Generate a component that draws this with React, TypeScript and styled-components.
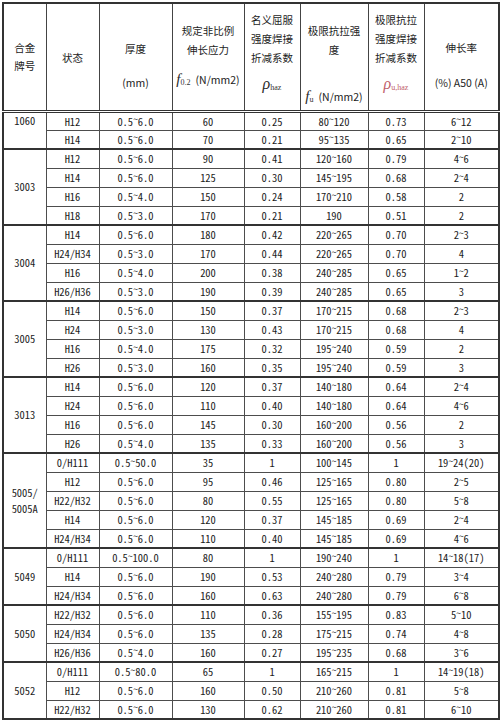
import React from "react";
import styled, { createGlobalStyle } from "styled-components";

const GlobalStyle = createGlobalStyle`
  html, body {
    margin: 0;
    padding: 0;
    background: #ffffff;
  }
  body {
    font-family: "Noto Sans CJK SC", "Noto Sans", sans-serif;
    color: #1c1c1c;
  }
`;

type Row = [string, string, string, string, string, string, string];

interface Group {
  alloy: string[];
  top?: boolean;
  rows: Row[];
}

const groups: Group[] = [
  {
    alloy: ["1060"],
    top: true,
    rows: [
      ["H12", "0.5~6.0", "60", "0.25", "80~120", "0.73", "6~12"],
      ["H14", "0.5~6.0", "70", "0.21", "95~135", "0.65", "2~10"],
    ],
  },
  {
    alloy: ["3003"],
    rows: [
      ["H12", "0.5~6.0", "90", "0.41", "120~160", "0.79", "4~6"],
      ["H14", "0.5~6.0", "125", "0.30", "145~195", "0.68", "2~4"],
      ["H16", "0.5~4.0", "150", "0.24", "170~210", "0.58", "2"],
      ["H18", "0.5~3.0", "170", "0.21", "190", "0.51", "2"],
    ],
  },
  {
    alloy: ["3004"],
    rows: [
      ["H14", "0.5~6.0", "180", "0.42", "220~265", "0.70", "2~3"],
      ["H24/H34", "0.5~3.0", "170", "0.44", "220~265", "0.70", "4"],
      ["H16", "0.5~4.0", "200", "0.38", "240~285", "0.65", "1~2"],
      ["H26/H36", "0.5~3.0", "190", "0.39", "240~285", "0.65", "3"],
    ],
  },
  {
    alloy: ["3005"],
    rows: [
      ["H14", "0.5~6.0", "150", "0.37", "170~215", "0.68", "2~3"],
      ["H24", "0.5~3.0", "130", "0.43", "170~215", "0.68", "4"],
      ["H16", "0.5~4.0", "175", "0.32", "195~240", "0.59", "2"],
      ["H26", "0.5~3.0", "160", "0.35", "195~240", "0.59", "3"],
    ],
  },
  {
    alloy: ["3013"],
    rows: [
      ["H14", "0.5~6.0", "120", "0.37", "140~180", "0.64", "2~4"],
      ["H24", "0.5~6.0", "110", "0.40", "140~180", "0.64", "4~6"],
      ["H16", "0.5~6.0", "145", "0.30", "160~200", "0.56", "2"],
      ["H26", "0.5~4.0", "135", "0.33", "160~200", "0.56", "3"],
    ],
  },
  {
    alloy: ["5005/", "5005A"],
    rows: [
      ["0/H111", "0.5~50.0", "35", "1", "100~145", "1", "19~24(20)"],
      ["H12", "0.5~6.0", "95", "0.46", "125~165", "0.80", "2~5"],
      ["H22/H32", "0.5~6.0", "80", "0.55", "125~165", "0.80", "5~8"],
      ["H14", "0.5~6.0", "120", "0.37", "145~185", "0.69", "2~4"],
      ["H24/H34", "0.5~6.0", "110", "0.40", "145~185", "0.69", "4~6"],
    ],
  },
  {
    alloy: ["5049"],
    rows: [
      ["0/H111", "0.5~100.0", "80", "1", "190~240", "1", "14~18(17)"],
      ["H14", "0.5~6.0", "190", "0.53", "240~280", "0.79", "3~4"],
      ["H24/H34", "0.5~6.0", "160", "0.63", "240~280", "0.79", "6~8"],
    ],
  },
  {
    alloy: ["5050"],
    rows: [
      ["H22/H32", "0.5~6.0", "110", "0.36", "155~195", "0.83", "5~10"],
      ["H24/H34", "0.5~6.0", "135", "0.28", "175~215", "0.74", "4~8"],
      ["H26/H36", "0.5~4.0", "160", "0.27", "195~235", "0.68", "3~6"],
    ],
  },
  {
    alloy: ["5052"],
    rows: [
      ["0/H111", "0.5~80.0", "65", "1", "165~215", "1", "14~19(18)"],
      ["H12", "0.5~6.0", "160", "0.50", "210~260", "0.81", "5~8"],
      ["H22/H32", "0.5~6.0", "130", "0.62", "210~260", "0.81", "6~10"],
    ],
  },
];

const colWidths = [43, 53, 73, 72, 56, 68, 56, 75];

const Page = styled.div`
  padding: 2px 2px 0 2px;
`;

const Table = styled.table`
  width: 496px;
  table-layout: fixed;
  border-collapse: collapse;
  border: 2px solid #333333;
  font-size: 10.5px;
  font-feature-settings: "hwid";
`;

const HeadRow = styled.tr`
  height: 108px;
`;

const Th = styled.th<{ $pt: number }>`
  vertical-align: top;
  padding: ${(p) => p.$pt}px 0 0 0;
  border: 1px solid #444444;
  border-bottom: 3px double #333333;
  font-weight: normal;
  font-feature-settings: normal;
  text-align: center;
  line-height: 19px;
  white-space: nowrap;
  overflow: hidden;
`;

const HeadLine = styled.div<{ $mt?: number }>`
  margin-top: ${(p) => p.$mt ?? 0}px;
  height: 19px;
`;

const BodyRow = styled.tr`
  height: 19px;
`;

const Td = styled.td<{ $first?: boolean; $top?: boolean }>`
  padding: 0;
  border: 1px solid #4d4d4d;
  border-top: ${(p) => (p.$first ? "2px solid #333333" : "1px solid #4d4d4d")};
  text-align: center;
  vertical-align: ${(p) => (p.$top ? "top" : "middle")};
  line-height: 17px;
  white-space: nowrap;
`;

const AlloyLine = styled.div`
  line-height: 16px;
`;

const Tilde = styled.span`
  display: inline-block;
  vertical-align: 0.25em;
  font-size: 0.9em;
  line-height: 1;
`;

const MathVar = styled.span<{ $size?: number; $red?: boolean }>`
  font-family: "Liberation Serif", "DejaVu Serif", serif;
  font-style: italic;
  font-size: ${(p) => p.$size ?? 15}px;
  color: ${(p) => (p.$red ? "#c0606a" : "#2a2a2a")};
`;

const Sub = styled.sub<{ $red?: boolean }>`
  font-family: "Liberation Serif", "DejaVu Serif", serif;
  font-size: 8px;
  vertical-align: -1px;
  color: ${(p) => (p.$red ? "#c0606a" : "#333333")};
`;

const Unit = styled.span`
  font-size: 10.5px;
  margin-left: 5px;
`;

const fmt = (s: string) => {
  const parts = s.split("~");
  return parts.map((part, i) => (
    <React.Fragment key={i}>
      {i > 0 && <Tilde>~</Tilde>}
      {part}
    </React.Fragment>
  ));
};

const App: React.FC = () => {
  return (
    <Page>
      <GlobalStyle />
      <Table>
        <colgroup>
          {colWidths.map((w, i) => (
            <col key={i} style={{ width: w }} />
          ))}
        </colgroup>
        <thead>
          <HeadRow>
            <Th $pt={34}>
              <HeadLine>合金</HeadLine>
              <HeadLine $mt={-1}>牌号</HeadLine>
            </Th>
            <Th $pt={44}>
              <HeadLine>状态</HeadLine>
            </Th>
            <Th $pt={35}>
              <HeadLine>厚度</HeadLine>
              <HeadLine $mt={15}>(mm)</HeadLine>
            </Th>
            <Th $pt={17}>
              <HeadLine>规定非比例</HeadLine>
              <HeadLine>伸长应力</HeadLine>
              <HeadLine $mt={11}>
                <MathVar>f</MathVar>
                <Sub>0.2</Sub>
                <Unit>(N/mm2)</Unit>
              </HeadLine>
            </Th>
            <Th $pt={6}>
              <HeadLine>名义屈服</HeadLine>
              <HeadLine>强度焊接</HeadLine>
              <HeadLine>折减系数</HeadLine>
              <HeadLine $mt={7}>
                <MathVar $size={16}>ρ</MathVar>
                <Sub>haz</Sub>
              </HeadLine>
            </Th>
            <Th $pt={17}>
              <HeadLine>极限抗拉强</HeadLine>
              <HeadLine>度</HeadLine>
              <HeadLine $mt={28}>
                <MathVar>f</MathVar>
                <Sub>u</Sub>
                <Unit>(N/mm2)</Unit>
              </HeadLine>
            </Th>
            <Th $pt={6}>
              <HeadLine>极限抗拉</HeadLine>
              <HeadLine>强度焊接</HeadLine>
              <HeadLine>折减系数</HeadLine>
              <HeadLine $mt={7}>
                <MathVar $size={16} $red>
                  ρ
                </MathVar>
                <Sub $red>u,haz</Sub>
              </HeadLine>
            </Th>
            <Th $pt={34}>
              <HeadLine>伸长率</HeadLine>
              <HeadLine $mt={16}>(%) A50 (A)</HeadLine>
            </Th>
          </HeadRow>
        </thead>
        <tbody>
          {groups.map((g) =>
            g.rows.map((r, ri) => (
              <BodyRow key={g.alloy.join("") + ri}>
                {ri === 0 && (
                  <Td rowSpan={g.rows.length} $first $top={g.top}>
                    {g.alloy.map((a) => (
                      <AlloyLine key={a}>{a}</AlloyLine>
                    ))}
                  </Td>
                )}
                {r.map((c, ci) => (
                  <Td key={ci} $first={ri === 0}>
                    {fmt(c)}
                  </Td>
                ))}
              </BodyRow>
            ))
          )}
        </tbody>
      </Table>
    </Page>
  );
};

export default App;
